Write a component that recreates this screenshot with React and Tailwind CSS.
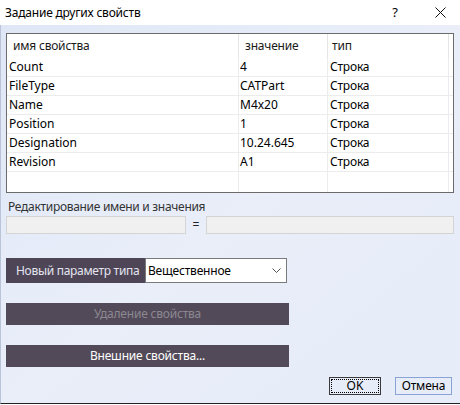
import React from "react";

const rows = [
  ["Count", "4", "Строка"],
  ["FileType", "CATPart", "Строка"],
  ["Name", "M4x20", "Строка"],
  ["Position", "1", "Строка"],
  ["Designation", "10.24.645", "Строка"],
  ["Revision", "A1", "Строка"],
];

export default function App() {
  return (
    <div
      className="w-[460px] h-[405px] flex flex-col overflow-hidden text-black"
      style={{ fontFamily: '"Noto Sans", "Open Sans", sans-serif' }}
    >
      {/* Title bar */}
      <div className="h-[25px] bg-white flex items-center shrink-0">
        <div className="pl-[5px] text-[12px] tracking-[-0.2px] leading-none flex-1">Задание других свойств</div>
        <div className="w-[20px] text-center text-[13px] leading-none mr-[25px]">?</div>
        <div className="w-[20px] flex justify-center mr-[10px]">
          <svg width="11" height="11" viewBox="0 0 11 11">
            <path d="M0.5 0.5 L10.5 10.5 M10.5 0.5 L0.5 10.5" stroke="#111" strokeWidth="1" />
          </svg>
        </div>
      </div>

      {/* Body */}
      <div className="h-[379px] flex flex-col bg-gradient-to-br from-[#dfe7f6] via-[#e9eef9] to-[#e6ecf8] border-l border-[#b9c4d8] border-b border-b-[#222] pt-[8px] pl-[5px] pr-[6px]">
        {/* Table */}
        <div className="h-[160px] border border-[#6b6b6b] bg-white flex">
          <div className="flex-1 flex flex-col">
            <div className="h-[24px] flex text-[12px] text-[#1a1a1a] items-center tracking-[-0.2px]">
              <div className="w-[232px] pl-[6px] h-full flex items-center border-r border-[#e5e5e5]">имя свойства</div>
              <div className="w-[89px] pl-[6px] h-full flex items-center border-r border-[#e5e5e5]">значение</div>
              <div className="w-[121px] pl-[4px] h-full flex items-center border-r border-[#e5e5e5]">тип</div>
            </div>
            {rows.map((r) => (
              <div key={r[0]} className="h-[19px] flex text-[12px] leading-none border-b border-[#ececec]">
                <div className="w-[232px] pl-[2px] flex items-center border-r border-[#ececec]">{r[0]}</div>
                <div className="w-[89px] pl-[1px] flex items-center border-r border-[#ececec]">{r[1]}</div>
                <div className="w-[121px] pl-[2px] flex items-center border-r border-[#ececec] tracking-[-0.2px]">{r[2]}</div>
              </div>
            ))}
            <div className="flex-1 flex">
              <div className="w-[232px] border-r border-[#ececec]" />
              <div className="w-[89px] border-r border-[#ececec]" />
              <div className="w-[121px] border-r border-[#ececec]" />
            </div>
          </div>
        </div>

        {/* Edit label */}
        <div className="mt-[6px] pl-[2px] text-[12px] tracking-[-0.3px] text-[#333] leading-none h-[16px] flex items-center">
          Редактирование имени и значения
        </div>
        <div className="mt-[1px] flex items-center h-[18px]">
          <div className="w-[180px] h-[18px] bg-[#f0f0f0] border border-[#d4d4d4]" />
          <div className="w-[20px] text-center text-[12px] text-[#222]">=</div>
          <div className="flex-1 h-[18px] bg-[#f0f0f0] border border-[#d4d4d4]" />
        </div>

        {/* New param type */}
        <div className="mt-[24px] flex h-[25px]">
          <div className="w-[139px] bg-[#4e4656] text-[#e4e4f0] text-[12px] tracking-[-0.3px] whitespace-nowrap flex items-center pl-[10px]">
            Новый параметр типа
          </div>
          <div className="w-[142px] bg-white border border-[#7a7a7a] flex items-center pl-[2px] pr-[5px] text-[12px] tracking-[-0.2px]">
            <span className="flex-1">Вещественное</span>
            <svg width="9" height="6" viewBox="0 0 9 6">
              <path d="M0.5 0.5 L4.5 4.5 L8.5 0.5" stroke="#555" strokeWidth="1" fill="none" />
            </svg>
          </div>
        </div>

        <div className="mt-[20px] w-[283px] h-[22px] bg-[#524a58] text-[#8c8892] text-[12px] tracking-[-0.2px] flex items-center justify-center">
          Удаление свойства
        </div>
        <div className="mt-[20px] w-[283px] h-[22px] bg-[#524a58] text-white text-[12px] tracking-[-0.2px] flex items-center justify-center">
          Внешние свойства...
        </div>

        <div className="mt-[10px] flex justify-end gap-[14px] pr-[2px]">
          <div className="w-[52px] h-[18px] border border-[#3a3a3a] flex items-center justify-center text-[12px] p-[1px]">
            <div className="w-full h-full border border-dotted border-black flex items-center justify-center">OK</div>
          </div>
          <div className="w-[57px] h-[18px] border border-[#8aa3d6] flex items-center justify-center text-[12px] tracking-[-0.2px]">
            Отмена
          </div>
        </div>
      </div>
    </div>
  );
}
